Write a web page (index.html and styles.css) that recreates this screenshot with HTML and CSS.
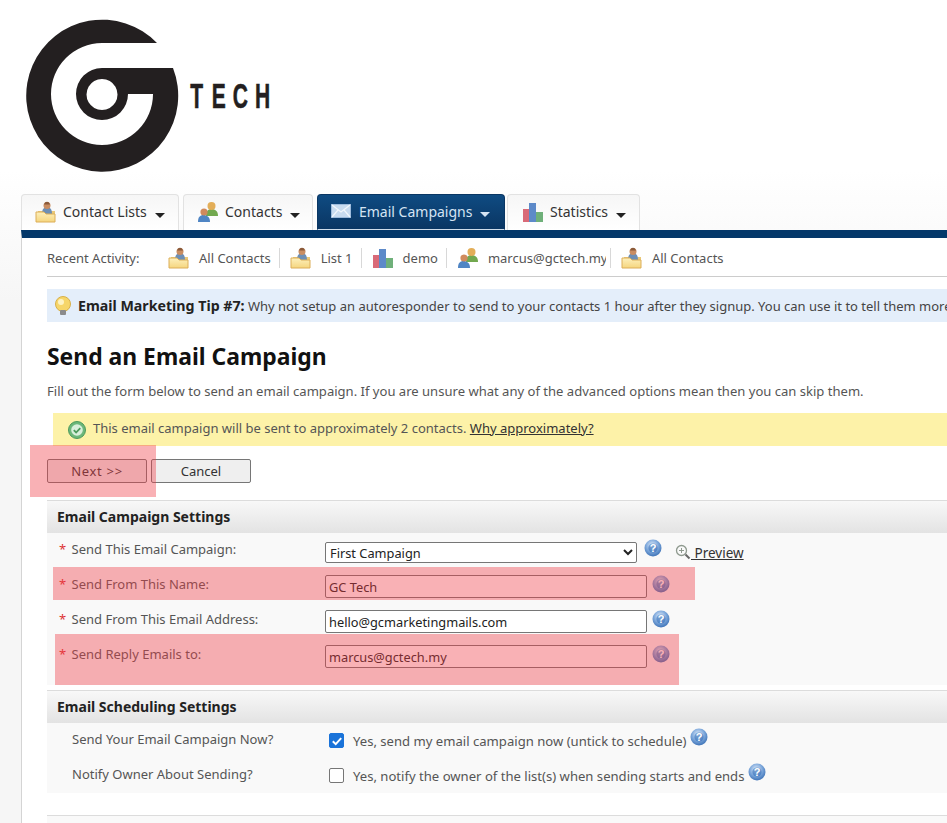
FILE: index.html
```html
<!DOCTYPE html>
<html lang="en">
<head>
    <meta charset="UTF-8">
    <title>Send an Email Campaign</title>
    <link rel="stylesheet" href="styles.css">
</head>
<body>
    <svg class="defs" width="0" height="0">
        <defs>
            <radialGradient id="helpFill" cx="45%" cy="35%" r="65%">
                <stop offset="0" stop-color="#e4eefa"/>
                <stop offset="0.55" stop-color="#7fa9dc"/>
                <stop offset="1" stop-color="#3f74b8"/>
            </radialGradient>
            <linearGradient id="folderFill" x1="0" y1="0" x2="0" y2="1">
                <stop offset="0" stop-color="#fdf0bc"/>
                <stop offset="1" stop-color="#f5d57e"/>
            </linearGradient>
            <symbol id="icoList" viewBox="0 0 22 22">
                <path d="M3 10h17v8H3z" fill="#e9c878"/>
                <path d="M7 13c0-5 2-7 5-7s5 2 5 7z" fill="#6d8fb5"/>
                <circle cx="12" cy="4.500" r="3.500" fill="#c98d62"/>
                <path d="M10 1.500c1-1 3-1 4 0l1 2H9z" fill="#8a5a3a"/>
                <path d="M1 11h8l2 2h9v8H1z" fill="url(#folderFill)" stroke="#dcae58"/>
            </symbol>
            <symbol id="icoContacts" viewBox="0 0 22 22">
                <path d="M9 15c0-5 2-7 5.500-7s6.500 2 6.500 7z" fill="#72a84f"/>
                <circle cx="14.500" cy="5" r="4" fill="#e3ae58"/>
                <path d="M1 21c0-5 2-7 5.500-7s6.500 2 6.500 7z" fill="#4f85c4"/>
                <circle cx="7" cy="11" r="3.600" fill="#d08a5c"/>
            </symbol>
            <symbol id="icoMail" viewBox="0 0 20 14">
                <rect x="0.500" y="0.500" width="19" height="13" fill="#c9dcf0" stroke="#9dbbdc"/>
                <path d="M1 1l9 7 9-7M1 13l6-7M19 13l-6-7" fill="none" stroke="#f2f7fc" stroke-width="1.200"/>
            </symbol>
            <symbol id="icoStats" viewBox="0 0 22 22">
                <rect x="1" y="8" width="6" height="13" fill="#d96a78"/>
                <rect x="7" y="2" width="7" height="19" fill="#5d8ac9"/>
                <rect x="14" y="11" width="7" height="10" fill="#6fb07a"/>
            </symbol>
            <symbol id="icoHelp" viewBox="0 0 18 18">
                <circle cx="9" cy="9" r="8.500" fill="url(#helpFill)"/>
                <circle cx="9" cy="9" r="4.600" fill="#2f69b4" opacity="0.550"/>
                <text x="9" y="12.600" text-anchor="middle" class="help-mark">?</text>
            </symbol>
        </defs>
    </svg>

    <header class="logo-bar">
        <svg class="logo" width="280" height="190" viewBox="0 0 280 190">
            <path fill-rule="evenodd" fill="#231f20" d="M157 43A76 76 0 1 0 173 68H102A26 26 0 1 0 128 94H153A51 51 0 1 1 102 43ZM102 79a15.500 15.500 0 1 0 .01 0Z"/>
            <text class="logo-word" transform="scale(0.6 1)" y="108" x="317 353 388 425">TECH</text>
        </svg>
    </header>

    <nav class="tabs">
        <a class="tab tab-lists"><svg class="tab-ico"><use href="#icoList"/></svg>Contact Lists<span class="caret"></span></a>
        <a class="tab tab-contacts"><svg class="tab-ico"><use href="#icoContacts"/></svg>Contacts<span class="caret"></span></a>
        <a class="tab tab-active"><svg class="tab-ico mail-ico"><use href="#icoMail"/></svg>Email Campaigns<span class="caret"></span></a>
        <a class="tab tab-stats"><svg class="tab-ico"><use href="#icoStats"/></svg>Statistics<span class="caret"></span></a>
    </nav>

    <main class="main">
        <div class="recent">
            <span class="recent-label">Recent Activity:</span>
            <span class="recent-item"><svg class="recent-ico"><use href="#icoList"/></svg>All Contacts</span>
            <span class="recent-item"><svg class="recent-ico"><use href="#icoList"/></svg>List 1</span>
            <span class="recent-item"><svg class="recent-ico"><use href="#icoStats"/></svg>demo</span>
            <span class="recent-item"><svg class="recent-ico"><use href="#icoContacts"/></svg><span class="clip">marcus@gctech.my</span></span>
            <span class="recent-item recent-last"><svg class="recent-ico"><use href="#icoList"/></svg>All Contacts</span>
        </div>

        <div class="tip">
            <svg class="tip-ico" viewBox="0 0 18 20" width="18" height="20">
                <circle cx="9" cy="8" r="7.500" fill="#f6d66a" stroke="#d8b04a"/>
                <circle cx="7" cy="6" r="3" fill="#fdf3c4"/>
                <rect x="6" y="14" width="6" height="5" rx="1" fill="#8b8b8b"/>
            </svg>
            <b>Email Marketing Tip #7:</b>&nbsp;Why not setup an autoresponder to send to your contacts 1 hour after they signup. You can use it to tell them more about your company and what they can expect.
        </div>

        <h1>Send an Email Campaign</h1>
        <p class="intro">Fill out the form below to send an email campaign. If you are unsure what any of the advanced options mean then you can skip them.</p>

        <div class="notice">
            <svg class="notice-ico" viewBox="0 0 18 18" width="18" height="18">
                <circle cx="9" cy="9" r="8.500" fill="#6cb77a" stroke="#4c9a5c"/>
                <circle cx="9" cy="9" r="5.800" fill="#d9efdc"/>
                <path d="M5.800 9.200l2.300 2.300 4.200-4.400" fill="none" stroke="#4c9a5c" stroke-width="1.800"/>
            </svg>
            <span class="notice-text">This email campaign will be sent to approximately 2 contacts.&nbsp;<a class="link">Why approximately?</a></span>
        </div>

        <div class="buttons">
            <button type="button" class="btn btn-next">Next &gt;&gt;</button>
            <button type="button" class="btn">Cancel</button>
        </div>

        <section class="panel">
            <h2>Email Campaign Settings</h2>
            <div class="rows rows-main">
                <div class="row">
                    <label class="row-label"><span class="req">*</span> Send This Email Campaign:</label>
                    <select class="field-select"><option>First Campaign</option></select>
                    <svg class="help help-select"><use href="#icoHelp"/></svg>
                    <svg class="zoom-ico" viewBox="0 0 16 16" width="16" height="16">
                        <circle cx="6.500" cy="6.500" r="5" fill="none" stroke="#8f9a8f" stroke-width="1.300"/>
                        <path d="M4 6.500h5M6.500 4v5" stroke="#8f9a8f"/>
                        <path d="M10.500 10.500l4 4" stroke="#666" stroke-width="2"/>
                    </svg>
                    <a class="link preview">&nbsp;Preview</a>
                </div>
                <div class="row">
                    <label class="row-label"><span class="req">*</span> Send From This Name:</label>
                    <input class="field" type="text" value="GC Tech">
                    <svg class="help"><use href="#icoHelp"/></svg>
                </div>
                <div class="row">
                    <label class="row-label"><span class="req">*</span> Send From This Email Address:</label>
                    <input class="field" type="text" value="hello@gcmarketingmails.com">
                    <svg class="help"><use href="#icoHelp"/></svg>
                </div>
                <div class="row">
                    <label class="row-label"><span class="req">*</span> Send Reply Emails to:</label>
                    <input class="field" type="text" value="marcus@gctech.my">
                    <svg class="help"><use href="#icoHelp"/></svg>
                </div>
            </div>
        </section>

        <section class="panel panel-schedule">
            <h2>Email Scheduling Settings</h2>
            <div class="rows">
                <div class="row row-check">
                    <label class="row-label row-plain">Send Your Email Campaign Now?</label>
                    <span class="check check-on"><svg viewBox="0 0 14 14" width="14" height="14"><path d="M2.800 7.200l2.900 2.900 5.500-6" fill="none" stroke="#fff" stroke-width="2"/></svg></span>
                    <span class="check-text">Yes, send my email campaign now (untick to schedule)</span>
                    <svg class="help help-raised"><use href="#icoHelp"/></svg>
                </div>
                <div class="row row-check">
                    <label class="row-label row-plain">Notify Owner About Sending?</label>
                    <span class="check"></span>
                    <span class="check-text">Yes, notify the owner of the list(s) when sending starts and ends</span>
                    <svg class="help help-raised"><use href="#icoHelp"/></svg>
                </div>
            </div>
        </section>

        <div class="panel-next"></div>
    </main>

    <div class="mark mark-next"></div>
    <div class="mark mark-name"></div>
    <div class="mark mark-reply"></div>
</body>
</html>
```

FILE: styles.css
```css
html, body {
    margin: 0;
    height: 823px;
    overflow: hidden;
}
body {
    position: relative;
    font-family: "Noto Sans", "DejaVu Sans", sans-serif;
    font-size: 13px;
    color: #555;
    background: linear-gradient(to bottom, #fff 170px, #f6f6f6 300px);
}
.defs {
    position: absolute;
}
.help-mark {
    font-family: "Liberation Sans", sans-serif;
    font-size: 11px;
    font-weight: bold;
    fill: #fff;
}
.logo-bar {
    height: 194px;
}
.logo {
    display: block;
}
.logo-word {
    font-family: "Liberation Sans", sans-serif;
    font-size: 35px;
    font-weight: bold;
    fill: #231f20;
    stroke: #231f20;
    stroke-width: 0.6px;
}
.tabs {
    display: flex;
    height: 36px;
    padding-left: 21px;
    gap: 4px;
}
.tab {
    display: flex;
    align-items: center;
    box-sizing: border-box;
    padding: 0 0 2px 13px;
    font-size: 14px;
    color: #333;
    white-space: nowrap;
    background: linear-gradient(to bottom, #f6f6f6, #fff);
    border: 1px solid #e2e2e2;
    border-bottom: none;
    border-radius: 4px 4px 0 0;
}
.tab-lists { width: 158px; }
.tab-contacts { width: 130px; }
.tab-active {
    width: 188px;
    color: #d5e4f3;
    background: linear-gradient(to bottom, #0f4b82, #0a3663);
    border: 1px solid #0a3663;
    border-bottom: 1px solid #cfdcea;
}
.tab-stats {
    width: 133px;
    margin-left: -2px;
    padding-left: 14px;
}
.tab-ico {
    width: 22px;
    height: 22px;
    margin-right: 6px;
    flex: none;
}
.mail-ico {
    width: 20px;
    height: 14px;
    margin-right: 8px;
}
.caret {
    width: 0;
    height: 0;
    margin: 7px 0 0 8px;
    border-left: 5px solid transparent;
    border-right: 5px solid transparent;
    border-top: 5px solid #222;
}
.tab-active .caret {
    border-top-color: #d5e4f3;
}
.main {
    box-sizing: border-box;
    height: 593px;
    margin-left: 21px;
    padding-left: 25px;
    background: #fff;
    border-top: 8px solid #04386a;
    border-left: 1px solid #d4d4d4;
    overflow: hidden;
}
.recent {
    display: flex;
    align-items: center;
    height: 39px;
    padding-top: 2px;
    box-sizing: border-box;
    border-bottom: 1px solid #ccc;
    white-space: nowrap;
}
.recent-label {
    width: 121px;
    flex: none;
}
.recent-item {
    display: flex;
    align-items: center;
    height: 20px;
    padding-right: 8px;
    margin-right: 10px;
    border-right: 1px solid #d8d8d8;
}
.recent-last {
    border-right: none;
}
.recent-ico {
    width: 22px;
    height: 22px;
    margin-right: 9px;
    flex: none;
}
.clip {
    display: block;
    width: 118px;
    margin-right: -4px;
    overflow: hidden;
}
.tip {
    display: flex;
    align-items: center;
    height: 33px;
    margin-top: 12px;
    padding-left: 7px;
    font-size: 13px;
    color: #444;
    background: #e4eefa;
    white-space: nowrap;
    overflow: hidden;
}
.tip b {
    font-size: 14.2px;
    color: #222;
}
.tip-ico {
    margin-right: 6px;
    flex: none;
}
h1 {
    margin: 18px 0 0;
    font-size: 22.9px;
    line-height: 33px;
    color: #111;
}
.intro {
    margin: 9px 0 0;
    font-size: 13.05px;
    line-height: 18px;
    white-space: nowrap;
}
.notice {
    display: flex;
    align-items: center;
    height: 33px;
    margin: 13px 0 0 6px;
    padding-left: 15px;
    background: #fdf2a8;
    white-space: nowrap;
}
.notice-ico {
    margin-right: 7px;
    flex: none;
}
.notice-text {
    margin-top: -4px;
}
.link {
    color: #333;
    text-decoration: underline;
}
.buttons {
    display: flex;
    gap: 4px;
    margin-top: 13px;
}
.btn {
    width: 100px;
    height: 24px;
    padding: 0;
    font-family: inherit;
    font-size: 13px;
    color: #333;
    background: #efefef;
    border: 1px solid #767676;
    border-radius: 2px;
}
.btn-next {
    letter-spacing: 0.7px;
}
.panel {
    margin-top: 17px;
}
.panel-schedule {
    margin-top: 5px;
}
.panel h2 {
    display: flex;
    align-items: center;
    box-sizing: border-box;
    height: 33px;
    margin: 0;
    padding: 0 0 2px 10px;
    font-size: 14px;
    color: #222;
    background: linear-gradient(to bottom, #f8f8f8, #e3e3e3);
    border-top: 1px solid #dcdcdc;
}
.rows {
    background: #f9f9f9;
}
.rows-main {
    box-sizing: border-box;
    height: 152px;
    padding-top: 1px;
}
.row {
    display: flex;
    align-items: center;
    height: 35px;
    padding-left: 12px;
    white-space: nowrap;
}
.row-label {
    width: 266px;
    flex: none;
    margin-top: -5px;
}
.row-plain {
    width: 257px;
    padding-left: 13px;
    margin-top: -3px;
}
.req {
    margin-right: 2px;
    color: #d33;
}
.field-select {
    box-sizing: border-box;
    width: 312px;
    height: 21px;
    margin-top: 2px;
    padding: 0;
    font-family: inherit;
    font-size: 12.8px;
    color: #222;
    background: #fff;
    border: 1px solid #767676;
    border-radius: 2px;
}
.field {
    box-sizing: border-box;
    width: 322px;
    height: 23px;
    padding: 0 3px;
    font-family: inherit;
    font-size: 12.8px;
    color: #222;
    background: #fff;
    border: 1px solid #767676;
    border-radius: 2px;
}
.help {
    width: 18px;
    height: 18px;
    margin: -6px 0 0 5px;
    flex: none;
}
.help-select {
    margin: -7px 0 0 7px;
}
.help-raised {
    margin: -8px 0 0 4px;
}
.zoom-ico {
    margin: 1px 0 0 13px;
    flex: none;
}
.preview {
    margin-top: 3px;
    font-size: 13.5px;
}
.check {
    display: flex;
    box-sizing: border-box;
    width: 15px;
    height: 15px;
    margin-right: 9px;
    flex: none;
    background: #fff;
    border: 1px solid #767676;
    border-radius: 2px;
}
.check-on {
    background: #1a73d9;
    border-color: #1a73d9;
}
.check-on svg {
    margin: -0.5px;
}
.check-text {
    font-size: 13.1px;
}
.panel-next {
    height: 8px;
    margin-top: 22px;
    background: #f9f9f9;
    border-top: 1px solid #dcdcdc;
}
.mark {
    position: absolute;
    background: rgba(240, 60, 70, 0.4);
}
.mark-next {
    left: 30px;
    top: 445px;
    width: 126px;
    height: 52px;
}
.mark-name {
    left: 53px;
    top: 567px;
    width: 642px;
    height: 33px;
}
.mark-reply {
    left: 55px;
    top: 634px;
    width: 624px;
    height: 51px;
}
```
